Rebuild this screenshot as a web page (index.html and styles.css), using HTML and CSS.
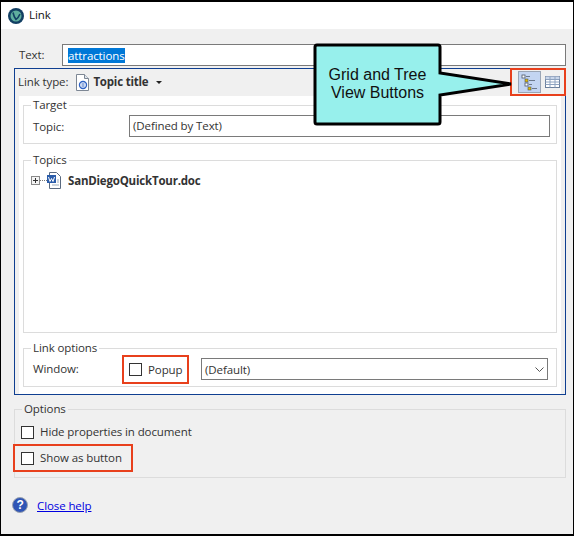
FILE: index.html
```html
<!DOCTYPE html>
<html>
<head><title>Link</title><meta charset="UTF-8">
  <link rel="stylesheet" href="styles.css">
</head>
<body>
  <div class="dialog">
    <div class="titlebar">
      <svg class="app-icon" width="16" height="16" viewBox="0 0 16 16">
        <circle cx="8" cy="8" r="8" fill="#123f63"/>
        <circle cx="8" cy="8" r="5.5" fill="#5fae9e"/>
        <path d="M5 4.5 Q6 9 8 11.5 Q10.5 9.5 12 6" fill="none" stroke="#123f63" stroke-width="1.6"/>
      </svg>
      <span class="title-text">Link</span>
    </div>

    <div class="content">
      <div class="text-row">
        <label class="text-label">Text:</label>
        <div class="input text-input"><span class="selected">attractions</span></div>
      </div>

      <div class="panel">
        <div class="panel-head">
          <span class="type-label">Link type:</span>
          <svg class="type-icon" width="13" height="17" viewBox="0 0 13 17">
            <path d="M.5.5H8.5L12.5 4.5V16.5H.5Z" fill="#fff" stroke="#7d8794"/>
            <path d="M8.5.5V4.5H12.5" fill="#dfe6ee" stroke="#7d8794"/>
            <circle cx="7" cy="11" r="3.5" fill="#fff" stroke="#2f62c4" stroke-width="1.4"/>
            <path d="M5.5 10H8.5M5.5 12H8.5" stroke="#2f62c4"/>
          </svg>
          <b class="type-name">Topic title</b>
          <span class="caret"></span>
          <div class="view-buttons callout-mark">
            <span class="view-btn active">
              <svg width="18" height="18" viewBox="0 0 18 18">
                <rect x="1" y="2" width="3" height="3" fill="#fff" stroke="#4a5568" stroke-width=".8"/>
                <path d="M5 3.5H9" stroke="#6b788c"/>
                <rect x="4" y="6" width="3" height="3" fill="#e0bb00" stroke="#4a5568" stroke-width=".6"/>
                <path d="M8 7.5H14" stroke="#6b788c"/>
                <rect x="4" y="10" width="3" height="3" fill="#fff" stroke="#4a5568" stroke-width=".8"/>
                <path d="M8 11.5H11" stroke="#6b788c"/>
                <rect x="7" y="14" width="3" height="3" fill="#e0bb00" stroke="#4a5568" stroke-width=".6"/>
                <path d="M11 15.5H16" stroke="#6b788c"/>
              </svg>
            </span>
            <svg class="grid-icon" width="15" height="12" viewBox="0 0 15 12">
              <rect x=".5" y=".5" width="14" height="11" fill="#fff" stroke="#6a7f9c"/>
              <rect x=".5" y=".5" width="14" height="2.5" fill="#c9d6ea"/>
              <path d="M5 .5V11.5M10 .5V11.5M.5 3.5H14.5M.5 6H14.5M.5 8.5H14.5" stroke="#8ea3c0" fill="none"/>
            </svg>
          </div>
        </div>

        <div class="panel-body">
          <fieldset class="group target">
            <legend>Target</legend>
            <div class="field-row">
              <label class="field-label">Topic:</label>
              <div class="input topic-input">(Defined by Text)</div>
            </div>
          </fieldset>

          <fieldset class="group topics">
            <legend>Topics</legend>
            <div class="tree-row">
              <span class="expander"></span>
              <span class="dots"></span>
              <svg class="doc-icon" width="14" height="17" viewBox="0 0 14 17">
                <path d="M2.5.5H9.5L13.5 4.5V16.5H2.5Z" fill="#fff" stroke="#5a6a80"/>
                <rect x="0" y="3" width="9" height="8" fill="#2a5caa"/>
                <path d="M1.5 5L3 9.5L4.5 6.5L6 9.5L7.5 5" fill="none" stroke="#fff"/>
                <path d="M10 8H12M10 10H12M5 13H12" stroke="#9ab"/>
              </svg>
              <b class="tree-name">SanDiegoQuickTour.doc</b>
            </div>
          </fieldset>

          <fieldset class="group link-options">
            <legend>Link options</legend>
            <div class="field-row">
              <label class="field-label">Window:</label>
              <div class="popup-mark callout-mark">
                <span class="check"></span>
                <span>Popup</span>
              </div>
              <div class="input window-select">
                <span>(Default)</span>
                <svg width="9" height="5" viewBox="0 0 9 5"><path d="M.5.5L4.5 4.5L8.5.5" fill="none" stroke="#555"/></svg>
              </div>
            </div>
          </fieldset>
        </div>
      </div>

      <fieldset class="group options">
        <legend>Options</legend>
        <div class="check-row hide-row">
          <span class="check"></span>
          <span class="check-text">Hide properties in document</span>
        </div>
        <div class="check-row button-mark callout-mark">
          <span class="check"></span>
          <span class="check-text">Show as button</span>
        </div>
      </fieldset>

      <div class="help-row">
        <svg width="16" height="16" viewBox="0 0 16 16">
          <circle cx="8" cy="8" r="7.5" fill="#2f55b5" stroke="#9aa3b0"/>
          <text x="8" y="12" class="help-mark">?</text>
        </svg>
        <a href="#">Close help</a>
      </div>
    </div>

    <div class="callout">
      <svg class="callout-shape" width="202" height="84" viewBox="0 0 202 84">
        <path d="M2 4Q2 2 4 2H125Q127 2 127 4V30L198 41L127 52V79Q127 81 125 81H4Q2 81 2 79Z" fill="#97f0ec" stroke="#000" stroke-width="3"/>
      </svg>
      <div class="callout-text">Grid and Tree<br>View Buttons</div>
    </div>
  </div>
</body>
</html>
```

FILE: styles.css
```css
* { box-sizing: border-box; }
html, body { margin: 0; padding: 0; }
body {
  font-family: "Open Sans", "Noto Sans", sans-serif;
  font-size: 11.5px;
  letter-spacing: -0.1px;
  color: #333;
}
b { letter-spacing: -0.2px; }

.dialog {
  position: relative;
  width: 574px;
  height: 536px;
  border: 1px solid #000;
  border-top-width: 2px;
  border-bottom-width: 2px;
  background: #f0f0f0;
  display: flex;
  flex-direction: column;
}

.titlebar {
  height: 27px;
  background: #fff;
  display: flex;
  align-items: center;
  gap: 5px;
  padding-left: 7px;
  flex: none;
  color: #111;
}
.title-text { padding-bottom: 2px; }

.content { padding: 15px 7px 0 13px; flex: 1; }

.text-row { display: flex; align-items: center; height: 22px; }
.text-label { width: 48px; padding: 0 0 2px 5px; }
.input {
  background: #fff;
  border: 1px solid #7a7a7a;
  display: flex;
  align-items: center;
  padding-left: 3px;
  height: 22px;
}
.text-input { flex: 1; padding-left: 5px; }
.topic-input { padding-bottom: 2px; }
.selected { background: #0078d7; color: #fff; line-height: 15px; }

.panel {
  margin-top: 2px;
  border: 1px solid #0f3f91;
  padding: 0 4px;
}
.panel-head {
  height: 27px;
  display: flex;
  align-items: center;
  margin: 0 -4px;
  padding-left: 3px;
}
.type-label, .type-name { padding-bottom: 2px; }
.type-icon { margin-left: 8px; }
.type-name { margin-left: 4px; }
.caret {
  margin-left: 8px;
  border: 3px solid transparent;
  border-top: 3px solid #222;
  border-bottom: 0;
}
.callout-mark { border: 2px solid #e8401c; }
.view-buttons {
  margin: -1px -1px 0 auto;
  width: 56px;
  height: 28px;
  display: flex;
  align-items: center;
  gap: 4px;
  padding-left: 6px;
}
.view-btn {
  width: 23px;
  height: 22px;
  background: #c3d5f2;
  border: 1px solid #9aa5b5;
  display: flex;
  align-items: center;
  justify-content: center;
}

.panel-body { background: #fff; padding: 1px 4px 7px; }

.group {
  margin: 0;
  padding: 0;
  border: 1px solid #dcdcdc;
  min-width: 0;
}
.group legend { padding: 0 2px; margin-left: 7px; line-height: 16px; }
.target { height: 47px; }
.topics { height: 181px; margin-top: 8px; }
.link-options { height: 47px; margin-top: 7px; }

.field-row { display: flex; align-items: center; height: 22px; margin-top: 2px; }
.field-label { width: 105px; padding-left: 9px; flex: none; }
.link-options .field-label { padding-bottom: 2px; }

.topic-input { width: 421px; }

.tree-row { display: flex; align-items: center; padding-left: 7px; height: 19px; margin-top: 3px; }
.expander {
  width: 9px;
  height: 9px;
  border: 1px solid #8a8a8a;
  background:
    linear-gradient(#333, #333) center / 5px 1px no-repeat,
    linear-gradient(#333, #333) center / 1px 5px no-repeat,
    #f4f4f4;
}
.dots { width: 7px; border-top: 1px dotted #777; }
.tree-name { margin-left: 7px; }

.link-options .field-label { width: 98px; }
.popup-mark {
  width: 67px;
  height: 29px;
  display: flex;
  align-items: center;
  gap: 6px;
  padding-left: 5px;
  flex: none;
}
.check {
  width: 13px;
  height: 13px;
  border: 1px solid #333;
  background: #fff;
  flex: none;
}
.window-select {
  width: 347px;
  margin-left: 12px;
  justify-content: space-between;
  padding-right: 3px;
}

.options { margin-top: 6px; height: 77px; }
.check-row { display: flex; align-items: center; gap: 6px; padding-left: 6px; height: 28px; }
.check-text { padding-bottom: 2px; }
.hide-row { height: 26px; margin-top: 2px; }
.button-mark { width: 120px; margin-top: -1px; margin-left: -2px; }
.help-row { display: flex; align-items: center; gap: 9px; margin-top: 19px; margin-left: -2px; }
.help-row a { color: #0000e0; }
.help-mark { fill: #fff; font: bold 12px "Liberation Sans", sans-serif; text-anchor: middle; }

.callout { position: absolute; left: 312px; top: 41px; width: 202px; height: 84px; }
.callout-shape { display: block; }
.callout-text {
  position: absolute;
  left: 2px;
  top: 23px;
  width: 125px;
  text-align: center;
  font: 16px/18px "Liberation Sans", sans-serif;
  letter-spacing: 0;
  color: #111;
}
```
